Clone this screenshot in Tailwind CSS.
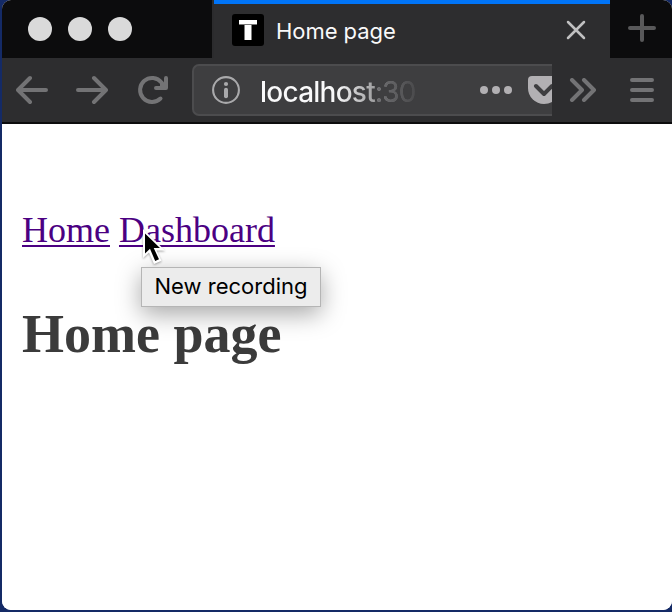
<!DOCTYPE html>
<html lang="en">
<head>
<meta charset="utf-8">
<title>Home page</title>
<script src="https://cdn.jsdelivr.net/npm/@tailwindcss/browser@4"></script>
</head>
<body class="w-[672px] h-[612px] overflow-hidden bg-[#142a66] pl-[2px] pb-[2px] font-['Inter','Roboto',sans-serif]">
<div class="relative flex h-[610px] w-[670px] flex-col overflow-hidden rounded-[9px] bg-white">
  <!-- Tab strip -->
  <div class="flex h-[58px] shrink-0 bg-[#0c0c0d]">
    <div class="flex w-[212px] shrink-0 items-center gap-4 border-r-2 border-[#2b2b2d] pl-[26px]">
      <span class="size-6 rounded-full bg-[#dadada]"></span>
      <span class="size-6 rounded-full bg-[#dadada]"></span>
      <span class="size-6 rounded-full bg-[#dadada]"></span>
    </div>
    <div class="flex w-[396px] shrink-0 items-start border-t-4 border-t-[#0074f8] bg-[#2d2d2f] pl-[18px] pt-[10px]">
      <svg class="size-8 shrink-0" viewBox="0 0 32 32"><rect width="32" height="32" rx="3" fill="#000"/><path d="M7 6h18v5h-5.500v15h-7V11H7z" fill="#fff"/><path d="M7 10.500h18" stroke="#777" stroke-width="1"/></svg>
      <span class="ml-3 w-[288px] whitespace-nowrap text-[22px] leading-[34px] tracking-[-0.05px] text-[#f9f9fa]">Home page</span>
      <svg class="mt-1 size-6 shrink-0" viewBox="0 0 24 24" fill="none" stroke="#c0c0c1" stroke-width="2.500" stroke-linecap="round"><path d="M4 4 20 20M20 4 4 20"/></svg>
    </div>
    <div class="flex w-[62px] items-start pl-[18px] pt-[14px]">
      <svg class="size-7" viewBox="0 0 28 28" fill="none" stroke="#59595a" stroke-width="4" stroke-linecap="round"><path d="M14 2v24M2 14h24"/></svg>
    </div>
  </div>
  <!-- Navigation toolbar -->
  <div class="flex h-[66px] shrink-0 border-b-2 border-[#0c0c0d] bg-[#2d2d2f] pt-[6px]">
    <div class="flex h-[52px] w-[190px] shrink-0 items-center gap-7 pl-[14px]">
      <svg class="size-8" viewBox="0 0 32 32" fill="none" stroke="#737375" stroke-width="4" stroke-linecap="round" stroke-linejoin="round"><path d="M14 4 2 16l12 12M2.500 16H30"/></svg>
      <svg class="size-8" viewBox="0 0 32 32" fill="none" stroke="#737375" stroke-width="4" stroke-linecap="round" stroke-linejoin="round"><path d="M18 4 30 16 18 28M29.500 16H2"/></svg>
      <svg class="size-8" viewBox="0 0 32 32" fill="none" stroke="#737375" stroke-width="4" stroke-linecap="round" stroke-linejoin="round"><path d="M24.500 24.500A12 12 0 1 1 25.500 8.500L28 12"/><path d="M30 4v10H20"/><path d="M24 10h4v4h-4z" fill="#737375" stroke="none"/></svg>
    </div>
    <div class="flex h-[52px] w-[360px] shrink-0 items-center overflow-hidden rounded-l-[7px] border-2 border-r-0 border-[#4c4c4e] bg-[#3e3e40] pl-[18px]">
      <svg class="size-7 shrink-0" viewBox="0 0 28 28" fill="none"><circle cx="14" cy="14" r="12.900" stroke="#a9a9ab" stroke-width="2.100"/><circle cx="14" cy="8" r="2.100" fill="#a9a9ab"/><path d="M14 13.800v6.400" stroke="#a9a9ab" stroke-width="4" stroke-linecap="round"/></svg>
      <span class="ml-5 w-[160px] shrink-0 overflow-hidden whitespace-nowrap bg-linear-to-r from-[#f9f9fa] from-48% to-[#3e3e40] to-100% bg-clip-text pt-[3px] text-[28px] font-medium leading-9 tracking-[-0.75px] text-transparent">localhost<span class="bg-linear-to-r from-[#727275] to-[#4a4a4c] bg-clip-text font-normal">:30</span></span>
      <svg class="ml-[56px] h-8 w-9 shrink-0" viewBox="0 0 36 32" fill="#b2b0b3"><circle cx="8" cy="16" r="4"/><circle cx="20" cy="16" r="4"/><circle cx="32" cy="16" r="4"/></svg>
      <svg class="ml-4 h-7 w-8 shrink-0" viewBox="0 0 32 28"><path d="M4 0h24q4 0 4 4v8a16 16 0 0 1-32 0V4q0-4 4-4z" fill="#b2b0b3"/><path d="m8 10 8 8 8-8" fill="none" stroke="#3e3e40" stroke-width="4" stroke-linecap="round" stroke-linejoin="round"/></svg>
    </div>
    <div class="flex h-[52px] items-center pl-[17px]">
      <svg class="h-6 w-7" viewBox="0 0 28 24" fill="none" stroke="#737375" stroke-width="4" stroke-linecap="round" stroke-linejoin="round"><path d="m3 2 10 10L3 22M15 2l10 10-10 10"/></svg>
      <svg class="ml-[33px] size-6" viewBox="0 0 24 24" stroke="#737375" stroke-width="4" stroke-linecap="round"><path d="M2 2h20M2 12h20M2 22h20"/></svg>
    </div>
  </div>
  <!-- Document -->
  <main class="flex flex-1 flex-col bg-white pl-5 pt-[86px] font-['Liberation_Serif','Times_New_Roman',serif]">
    <nav class="flex gap-[9px] text-[36px] leading-10 text-[#4b0082]">
      <a class="underline decoration-2 underline-offset-[3px] [text-decoration-skip-ink:none]">Home</a>
      <a class="underline decoration-2 underline-offset-[3px] [text-decoration-skip-ink:none]">Dashboard</a>
    </nav>
    <h1 class="mt-[54px] text-[54px] font-bold leading-[60px] text-[#3b3b3b]">Home page</h1>
  </main>
  <!-- Tooltip and pointer -->
  <div class="absolute left-[139px] top-[267px] flex h-10 w-[180px] items-center justify-center whitespace-nowrap border border-[#b5b5b5] bg-[#ececec] pb-[2px] text-[22px] leading-[30px] text-black shadow-[0_7px_24px_rgba(0,0,0,0.35)]">New recording</div>
  <svg class="absolute left-[139px] top-[226px] h-10 w-7 drop-shadow-[0_1px_1px_rgba(0,0,0,0.35)]" viewBox="0 0 28 40"><path d="M2 3v29l6-5.500 5 11.500 7.500-3.200-5-10.300H24z" fill="#fff"/><path d="M4 7.500v20l5-4.800 5.200 12.300 3.800-1.700-5.300-11.300H19z" fill="#000"/></svg>
</div>
</body>
</html>
